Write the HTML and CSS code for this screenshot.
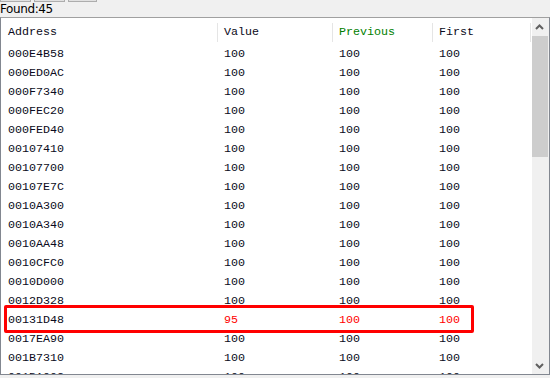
FILE: index.html
```html
<!DOCTYPE html>
<html>
<head>
<meta charset="utf-8">
<link rel="stylesheet" href="styles.css">
</head>
<body>
<div class="tabs"><div class="tab t1"></div><div class="tab t2"></div><div class="tab t3"></div></div>
<div class="found">Found:45</div>
<div class="list">
  <div class="content">
    <div class="row header">
      <div class="cell c1 sep">Address</div>
      <div class="cell sep">Value</div>
      <div class="cell sep prev">Previous</div>
      <div class="cell sep">First</div>
    </div>
    <div class="row"><div class="cell c1">000E4B58</div><div class="cell">100</div><div class="cell">100</div><div class="cell">100</div></div>
    <div class="row"><div class="cell c1">000ED0AC</div><div class="cell">100</div><div class="cell">100</div><div class="cell">100</div></div>
    <div class="row"><div class="cell c1">000F7340</div><div class="cell">100</div><div class="cell">100</div><div class="cell">100</div></div>
    <div class="row"><div class="cell c1">000FEC20</div><div class="cell">100</div><div class="cell">100</div><div class="cell">100</div></div>
    <div class="row"><div class="cell c1">000FED40</div><div class="cell">100</div><div class="cell">100</div><div class="cell">100</div></div>
    <div class="row"><div class="cell c1">00107410</div><div class="cell">100</div><div class="cell">100</div><div class="cell">100</div></div>
    <div class="row"><div class="cell c1">00107700</div><div class="cell">100</div><div class="cell">100</div><div class="cell">100</div></div>
    <div class="row"><div class="cell c1">00107E7C</div><div class="cell">100</div><div class="cell">100</div><div class="cell">100</div></div>
    <div class="row"><div class="cell c1">0010A300</div><div class="cell">100</div><div class="cell">100</div><div class="cell">100</div></div>
    <div class="row"><div class="cell c1">0010A340</div><div class="cell">100</div><div class="cell">100</div><div class="cell">100</div></div>
    <div class="row"><div class="cell c1">0010AA48</div><div class="cell">100</div><div class="cell">100</div><div class="cell">100</div></div>
    <div class="row"><div class="cell c1">0010CFC0</div><div class="cell">100</div><div class="cell">100</div><div class="cell">100</div></div>
    <div class="row"><div class="cell c1">0010D000</div><div class="cell">100</div><div class="cell">100</div><div class="cell">100</div></div>
    <div class="row"><div class="cell c1">0012D328</div><div class="cell">100</div><div class="cell">100</div><div class="cell">100</div></div>
    <div class="row changed"><div class="cell c1">00131D48</div><div class="cell">95</div><div class="cell">100</div><div class="cell">100</div></div>
    <div class="row"><div class="cell c1">0017EA90</div><div class="cell">100</div><div class="cell">100</div><div class="cell">100</div></div>
    <div class="row"><div class="cell c1">001B7310</div><div class="cell">100</div><div class="cell">100</div><div class="cell">100</div></div>
    <div class="row"><div class="cell c1">001BA00C</div><div class="cell">100</div><div class="cell">100</div><div class="cell">100</div></div>
  </div>
  <div class="scrollbar">
    <div class="sbtn"><svg width="9" height="6" viewBox="0 0 9 6"><path d="M1 5 L4.5 1.5 L8 5" fill="none" stroke="#606060" stroke-width="2"/></svg></div>
    <div class="thumb"></div>
    <div class="track"></div>
    <div class="sbtn"><svg width="9" height="6" viewBox="0 0 9 6"><path d="M1 1 L4.5 4.5 L8 1" fill="none" stroke="#606060" stroke-width="2"/></svg></div>
  </div>
  <div class="mark"></div>
</div>
</body>
</html>
```
FILE: styles.css
```css
html, body {
  margin: 0;
  padding: 0;
  background: #f0f0f0;
  width: 550px;
  height: 378px;
  overflow: hidden;
}
.tabs {
  display: flex;
  height: 2px;
}
.tab {
  height: 1px;
  background: #e1e1e1;
  border: 1px solid #adadad;
  border-top: none;
  margin-right: 2px;
}
.t1 { width: 29px; }
.t2 { width: 29px; margin-left: 1px; }
.t3 { width: 27px; margin-left: 1px; }
.found {
  height: 15px;
  line-height: 15px;
  font-family: "DejaVu Sans", sans-serif;
  font-size: 12px;
  letter-spacing: -0.4px;
  color: #000;
  padding-left: 0;
}
.list {
  position: relative;
  box-sizing: border-box;
  height: 358px;
  width: 550px;
  border: 1px solid #828790;
  border-top-color: #a0a0a0;
  background: #fff;
  display: flex;
  overflow: hidden;
}
.content {
  width: 531px;
  overflow: hidden;
  font-family: "Liberation Mono", monospace;
  font-size: 11.67px;
  color: #0a0a20;
}
.row {
  display: grid;
  grid-template-columns: 217px 115px 100px 98px;
  height: 19px;
  line-height: 19px;
}
.header {
  height: 27px;
  padding-top: 5px;
  box-sizing: border-box;
}
.cell {
  padding-left: 6px;
  white-space: nowrap;
  overflow: hidden;
  position: relative;
}
.cell.c1 { padding-left: 7px; }
.sep::after {
  content: "";
  position: absolute;
  right: 0;
  top: -4px;
  width: 1px;
  height: 23px;
  background: #e5e5e5;
}
.prev { color: #008000; }
.changed .cell { color: #ff0000; }
.changed .cell.c1 { color: #0a0a20; }
.scrollbar {
  width: 17px;
  background: #f0f0f0;
  display: flex;
  flex-direction: column;
}
.sbtn {
  height: 17px;
  display: flex;
  align-items: center;
  justify-content: center;
}
.sbtn svg { margin-left: -2px; }
.thumb {
  height: 121px;
  margin: 1px 1px 0 0;
  background: #cdcdcd;
}
.track { flex: 1; }
.mark {
  position: absolute;
  left: 3px;
  top: 287px;
  width: 470px;
  height: 28px;
  box-sizing: border-box;
  border: 3px solid #ff0000;
  border-radius: 2px;
}
```
